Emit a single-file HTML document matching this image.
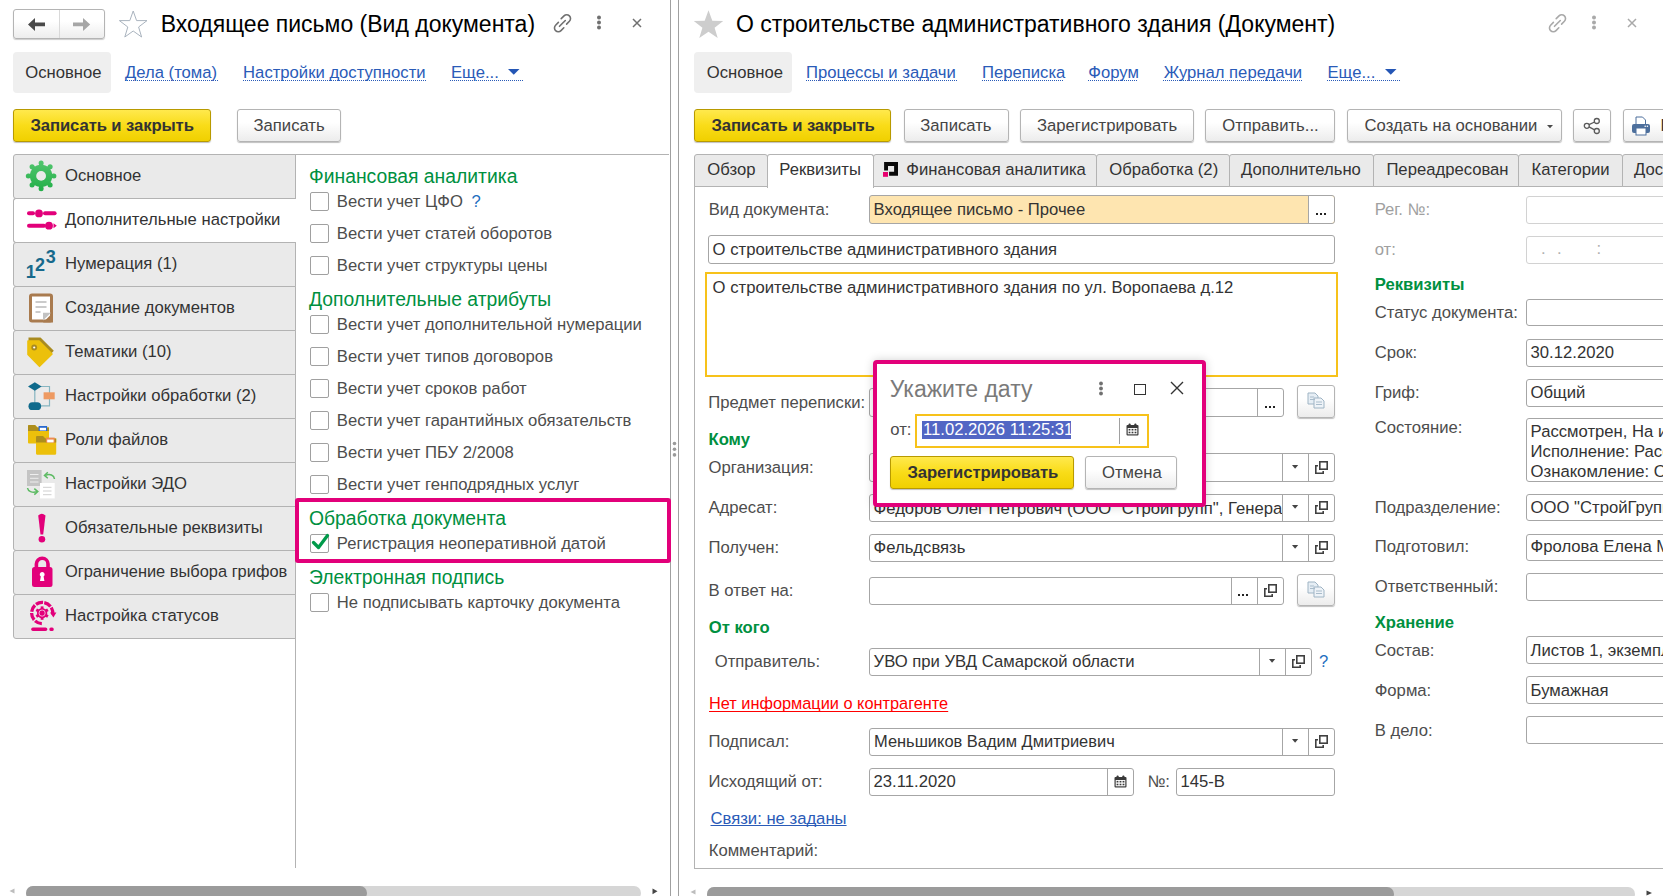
<!DOCTYPE html><html><head><meta charset="utf-8"><style>
html,body{margin:0;padding:0}
body{width:1665px;height:896px;position:relative;overflow:hidden;background:#fff;font-family:"Liberation Sans",sans-serif;font-size:16.67px}
.t{position:absolute;white-space:nowrap}
.r{position:absolute;box-sizing:border-box}
.s{position:absolute;overflow:visible}
.bw{border:1px solid #b4b4b4;border-radius:3px;background:linear-gradient(#fff 0%,#fff 40%,#ececec 100%);box-shadow:0 1px 1px rgba(0,0,0,.25)}
.by{border:1px solid #b89a00;border-radius:3px;background:linear-gradient(#ffe94d 0%,#f9dc18 50%,#f0d000 100%);box-shadow:0 1px 1px rgba(0,0,0,.25)}
.lk{color:#2a5bb8}
.u{border-bottom:1px dotted #2a5bb8}
</style></head><body>

<div class="r" style="left:13px;top:9px;width:92px;height:30px;border:1px solid #b4b4b4;border-radius:3px;background:linear-gradient(#fff 0%,#fff 40%,#ededed 100%);box-shadow:0 1px 1px rgba(0,0,0,.2)"></div>
<div class="r" style="left:59px;top:10px;width:1px;height:28px;background:#d9d9d9"></div>
<svg class="s" style="left:0px;top:0px;" width="160" height="50" viewBox="0 0 160 50"><path d="M28 24.5 L35 18 L35 22.6 L45 22.6 L45 26.3 L35 26.3 L35 31 Z" fill="#4a4a4a"/><path d="M90.2 24.5 L83 18 L83 22.6 L73 22.6 L73 26.3 L83 26.3 L83 31 Z" fill="#a6a6a6"/></svg>
<svg class="s" style="left:0px;top:0px;" width="160" height="50" viewBox="0 0 160 50"><path d="M133.2 11 L136.6 20.6 L147 20.6 L138.6 27 L141.6 37 L133.2 31 L124.8 37 L127.8 27 L119.4 20.6 L129.8 20.6 Z" fill="none" stroke="#a9b3be" stroke-width="1" stroke-linejoin="miter"/></svg>
<div class="t" style="left:160.7px;top:10px;font-size:23px;line-height:28px;color:#000;font-weight:normal;">Входящее письмо (Вид документа)</div>
<svg class="s" style="left:553px;top:14px;" width="19" height="19" viewBox="0 0 19 19"><g fill="none" stroke="#707070" stroke-width="1.6" stroke-linecap="round"><path d="M8.2 4.6 L11 1.9 A3.6 3.6 0 0 1 16.4 7.3 L13.6 10.1"/><path d="M5.4 8.4 L2.6 11.2 A3.6 3.6 0 0 0 8 16.6 L10.8 13.8"/><path d="M6.5 12.3 L12.3 6.5"/></g></svg>
<svg class="s" style="left:596px;top:14px;" width="6" height="16" viewBox="0 0 6 16"><g fill="#707070"><circle cx="3" cy="3.6" r="2"/><circle cx="3" cy="8.4" r="2"/><circle cx="3" cy="13.4" r="2"/></g></svg>
<svg class="s" style="left:632px;top:18px;" width="10" height="10" viewBox="0 0 10 10"><path d="M1 1 L9 9 M9 1 L1 9" stroke="#707070" stroke-width="1.5" fill="none"/></svg>
<div class="r" style="left:13px;top:52px;width:98px;height:41px;background:#efefef;border-radius:4px"></div>
<div class="t" style="left:25.2px;top:63px;font-size:16.67px;line-height:20px;color:#333;font-weight:normal;">Основное</div>
<div class="t" style="left:125px;top:63px;font-size:16.67px;line-height:20px;color:#2a5bb8;font-weight:normal;">Дела (тома)</div>
<div class="t" style="left:243.1px;top:63px;font-size:16.67px;line-height:20px;color:#2a5bb8;font-weight:normal;">Настройки доступности</div>
<div class="t" style="left:451px;top:63px;font-size:16.67px;line-height:20px;color:#2a5bb8;font-weight:normal;">Еще...</div>
<div class="r" style="left:125px;top:80px;width:92.5px;height:1px;background:repeating-linear-gradient(90deg,#2a5bb8 0 1px,transparent 1px 2px)"></div>
<div class="r" style="left:243px;top:80px;width:183px;height:1px;background:repeating-linear-gradient(90deg,#2a5bb8 0 1px,transparent 1px 2px)"></div>
<div class="r" style="left:450px;top:80px;width:73px;height:1px;background:repeating-linear-gradient(90deg,#2a5bb8 0 1px,transparent 1px 2px)"></div>
<svg class="s" style="left:508px;top:69px;" width="12" height="6" viewBox="0 0 12 6"><path d="M0 0 L11.5 0 L5.75 5.8 Z" fill="#2456b5"/></svg>
<div class="r by" style="left:13px;top:109px;width:198px;height:33px"></div>
<div class="t" style="left:30.5px;top:116px;font-size:16.67px;line-height:20px;color:#333;font-weight:bold;letter-spacing:-0.1px">Записать и закрыть</div>
<div class="r bw" style="left:236.6px;top:109px;width:104.4px;height:32.5px"></div>
<div class="t" style="left:253.5px;top:116px;font-size:16.67px;line-height:20px;color:#444;font-weight:normal;">Записать</div>
<div class="r" style="left:670px;top:0px;width:1px;height:896px;background:#a0a0a0"></div>
<div class="r" style="left:678px;top:0px;width:1px;height:896px;background:#a0a0a0"></div>
<svg class="s" style="left:672px;top:441px;" width="5" height="16" viewBox="0 0 5 16"><g fill="#9a9a9a"><circle cx="2.5" cy="2.5" r="1.8"/><circle cx="2.5" cy="8.2" r="1.8"/><circle cx="2.5" cy="13.9" r="1.8"/></g></svg>
<div class="r" style="left:295px;top:154px;width:374px;height:1px;background:#b3b3b3"></div>
<div class="r" style="left:295px;top:154px;width:1px;height:714px;background:#b3b3b3"></div>
<div class="r" style="left:13px;top:154px;width:283px;height:45px;background:#eaeaea;border:1px solid #b3b3b3;border-radius:3px 0 0 3px"></div>
<div class="t" style="left:65px;top:166px;font-size:16.67px;line-height:20px;color:#333;font-weight:normal;">Основное</div>
<div class="r" style="left:13px;top:198px;width:283px;height:45px;background:#fff;border:1px solid #b3b3b3;border-right:none;border-radius:3px 0 0 3px"></div>
<div class="t" style="left:65px;top:210px;font-size:16.67px;line-height:20px;color:#333;font-weight:normal;">Дополнительные настройки</div>
<div class="r" style="left:13px;top:242px;width:283px;height:45px;background:#eaeaea;border:1px solid #b3b3b3;border-radius:3px 0 0 3px"></div>
<div class="t" style="left:65px;top:254px;font-size:16.67px;line-height:20px;color:#333;font-weight:normal;">Нумерация (1)</div>
<div class="r" style="left:13px;top:286px;width:283px;height:45px;background:#eaeaea;border:1px solid #b3b3b3;border-radius:3px 0 0 3px"></div>
<div class="t" style="left:65px;top:298px;font-size:16.67px;line-height:20px;color:#333;font-weight:normal;">Создание документов</div>
<div class="r" style="left:13px;top:330px;width:283px;height:45px;background:#eaeaea;border:1px solid #b3b3b3;border-radius:3px 0 0 3px"></div>
<div class="t" style="left:65px;top:342px;font-size:16.67px;line-height:20px;color:#333;font-weight:normal;">Тематики (10)</div>
<div class="r" style="left:13px;top:374px;width:283px;height:45px;background:#eaeaea;border:1px solid #b3b3b3;border-radius:3px 0 0 3px"></div>
<div class="t" style="left:65px;top:386px;font-size:16.67px;line-height:20px;color:#333;font-weight:normal;">Настройки обработки (2)</div>
<div class="r" style="left:13px;top:418px;width:283px;height:45px;background:#eaeaea;border:1px solid #b3b3b3;border-radius:3px 0 0 3px"></div>
<div class="t" style="left:65px;top:430px;font-size:16.67px;line-height:20px;color:#333;font-weight:normal;">Роли файлов</div>
<div class="r" style="left:13px;top:462px;width:283px;height:45px;background:#eaeaea;border:1px solid #b3b3b3;border-radius:3px 0 0 3px"></div>
<div class="t" style="left:65px;top:474px;font-size:16.67px;line-height:20px;color:#333;font-weight:normal;">Настройки ЭДО</div>
<div class="r" style="left:13px;top:506px;width:283px;height:45px;background:#eaeaea;border:1px solid #b3b3b3;border-radius:3px 0 0 3px"></div>
<div class="t" style="left:65px;top:518px;font-size:16.67px;line-height:20px;color:#333;font-weight:normal;">Обязательные реквизиты</div>
<div class="r" style="left:13px;top:550px;width:283px;height:45px;background:#eaeaea;border:1px solid #b3b3b3;border-radius:3px 0 0 3px"></div>
<div class="t" style="left:65px;top:562px;font-size:16.67px;line-height:20px;color:#333;font-weight:normal;;transform:scaleX(0.985);transform-origin:0 0">Ограничение выбора грифов</div>
<div class="r" style="left:13px;top:594px;width:283px;height:45px;background:#eaeaea;border:1px solid #b3b3b3;border-radius:3px 0 0 3px"></div>
<div class="t" style="left:65px;top:606px;font-size:16.67px;line-height:20px;color:#333;font-weight:normal;">Настройка статусов</div>
<svg class="s" style="left:25px;top:160px;" width="32" height="32" viewBox="0 0 32 32"><defs><linearGradient id="gg" gradientUnits="userSpaceOnUse" x1="0" y1="3" x2="0" y2="29"><stop offset="0" stop-color="#4fc46c"/><stop offset="1" stop-color="#25b04a"/></linearGradient></defs><g fill="url(#gg)"><circle cx="28.90" cy="15.90" r="2.5"/><path d="M25.90 13.91 L28.72 13.73 L28.72 18.07 L25.90 17.89 Z"/><circle cx="25.15" cy="24.95" r="2.5"/><path d="M24.43 21.43 L26.55 23.29 L23.49 26.35 L21.63 24.23 Z"/><circle cx="16.10" cy="28.70" r="2.5"/><path d="M18.09 25.70 L18.27 28.52 L13.93 28.52 L14.11 25.70 Z"/><circle cx="7.05" cy="24.95" r="2.5"/><path d="M10.57 24.23 L8.71 26.35 L5.65 23.29 L7.77 21.43 Z"/><circle cx="3.30" cy="15.90" r="2.5"/><path d="M6.30 17.89 L3.48 18.07 L3.48 13.73 L6.30 13.91 Z"/><circle cx="7.05" cy="6.85" r="2.5"/><path d="M7.77 10.37 L5.65 8.51 L8.71 5.45 L10.57 7.57 Z"/><circle cx="16.10" cy="3.10" r="2.5"/><path d="M14.11 6.10 L13.93 3.28 L18.27 3.28 L18.09 6.10 Z"/><circle cx="25.15" cy="6.85" r="2.5"/><path d="M21.63 7.57 L23.49 5.45 L26.55 8.51 L24.43 10.37 Z"/><circle cx="16.1" cy="15.9" r="11.2"/></g><circle cx="16.1" cy="15.9" r="4.9" fill="#eaeaea"/></svg>
<svg class="s" style="left:0px;top:0px;pointer-events:none" width="80" height="680" viewBox="0 0 80 680"><g stroke="#e2007a" stroke-width="4" stroke-linecap="round"><path d="M29 213.3 L33 213.3"/><path d="M45 213.3 L54.6 213.3"/><path d="M29 225.7 L44 225.7"/></g><circle cx="39" cy="213.4" r="3.9" fill="#e2007a"/><circle cx="49" cy="225.7" r="3.9" fill="#e2007a"/><path d="M53.5 223.2 L56.8 225.7 L53.5 228.2 Z" fill="#e2007a"/></svg>
<svg class="s" style="left:0px;top:0px;" width="80" height="680" viewBox="0 0 80 680"><g fill="#17698c" font-family="Liberation Sans" font-weight="bold" font-size="18"><text x="25.8" y="278.3">1</text><text x="35" y="270.5">2</text><text x="45.8" y="262.9">3</text></g></svg>
<svg class="s" style="left:28px;top:293px;" width="26" height="30" viewBox="0 0 26 30"><rect x="2.5" y="2" width="21" height="26" rx="1.5" fill="#fff" stroke="#a97b4f" stroke-width="3"/><path d="M15 29.5 L25 19.5 L25 29.5 Z" fill="#a97b4f"/><path d="M15 27.5 L15 19.8 L23 19.8 Z" fill="#c2c2c2"/><g stroke="#a0a0a0" stroke-width="1.1"><path d="M7.5 9 L18.5 9"/><path d="M7.5 14 L18.5 14"/><path d="M7.5 19 L12.5 19"/></g></svg>
<svg class="s" style="left:0px;top:0px;" width="80" height="680" viewBox="0 0 80 680"><path d="M28.5 337.5 L40.5 337.5 L53.8 350.8 L50 355 L39 341 L28.5 341 Z" fill="#a98b20"/><path d="M28 341 L39 341 L52 354 L39.5 366.3 L28 354.5 Z" fill="#ecc00b" stroke="#ecc00b" stroke-width="1.6" stroke-linejoin="round"/><circle cx="34.2" cy="347.5" r="2.9" fill="#a98b20"/><circle cx="34.2" cy="347.5" r="1.1" fill="#fff"/></svg>
<svg class="s" style="left:0px;top:0px;" width="80" height="680" viewBox="0 0 80 680"><path d="M41 386.5 L49.5 386.5 L49.5 405.8 L41 405.8" fill="none" stroke="#86b5c0" stroke-width="1.2"/><path d="M34.8 390 L34.8 403" stroke="#86b5c0" stroke-width="1.2"/><path d="M28 386.5 L34.8 382.3 L41.6 386.5 L34.8 390.8 Z" fill="#0f6a8c"/><rect x="28.5" y="402.3" width="12.6" height="7.8" rx="3.9" fill="#0f6a8c"/><rect x="43.6" y="392.3" width="11.1" height="7" fill="#ee9a62"/></svg>
<svg class="s" style="left:0px;top:0px;" width="80" height="680" viewBox="0 0 80 680"><path d="M28 426 Q28 425 29 425 L35 425 L37.5 427.5 L49 427.5 L49 442.5 Q49 443.6 48 443.6 L29 443.6 Q28 443.6 28 442.5 Z" fill="#ecc00b"/><path d="M28 426 Q28 425 29 425 L35 425 L37.5 427.5 L49 427.5 L49 431 L28 431 Z" fill="#ad8e1d"/><rect x="38.6" y="426" width="8.5" height="5" fill="#2a6ad0"/><rect x="39.8" y="427.8" width="6.2" height="2.6" fill="#fff"/><path d="M36 437 Q36 436 37 436 L43 436 L45.5 438.5 L56.2 438.5 L56.2 453.6 Q56.2 454.7 55.2 454.7 L37 454.7 Q36 454.7 36 453.6 Z" fill="#ecc00b"/><path d="M36 437 Q36 436 37 436 L43 436 L45.5 438.5 L56.2 438.5 L56.2 442.6 L36 442.6 Z" fill="#ad8e1d"/><rect x="46" y="437.6" width="8.7" height="5" fill="#ee8a50"/><rect x="47.2" y="439.6" width="6.4" height="2.8" fill="#fff"/></svg>
<svg class="s" style="left:0px;top:0px;" width="80" height="680" viewBox="0 0 80 680"><rect x="27" y="470" width="14.6" height="16" fill="#c4c4c4"/><g stroke="#eee" stroke-width="1"><path d="M30 474.5 L38.5 474.5"/><path d="M30 478.3 L38.5 478.3"/><path d="M30 482 L38.5 482"/></g><rect x="40" y="483" width="14.7" height="15.4" fill="#fff"/><g stroke="#cfcfcf" stroke-width="1"><path d="M43 487.3 L51.5 487.3"/><path d="M43 491 L51.5 491"/><path d="M43 494.7 L51.5 494.7"/></g><path d="M54.5 479 C54 475 50 473.5 45.5 475.2" fill="none" stroke="#5cba62" stroke-width="1.5"/><path d="M47.8 472.3 L44.5 475.4 L47.8 478.2" stroke="#5cba62" stroke-width="1.5" fill="none"/><path d="M27.5 488 C28 491.5 32 493 37 491.8" fill="none" stroke="#5cba62" stroke-width="1.5"/><path d="M34.3 488.6 L37.8 491.6 L34.3 494.6" stroke="#5cba62" stroke-width="1.5" fill="none"/></svg>
<svg class="s" style="left:0px;top:0px;" width="80" height="680" viewBox="0 0 80 680"><path d="M38.2 515.5 Q41.8 512 45.5 515.5 L43.2 534.5 L40.5 534.5 Z" fill="#e2007a"/><circle cx="41.9" cy="539.3" r="3.3" fill="#e2007a"/></svg>
<svg class="s" style="left:0px;top:0px;" width="80" height="680" viewBox="0 0 80 680"><path d="M36.4 568 L36.4 564 A5.8 5.8 0 0 1 48 564 L48 568" fill="none" stroke="#e2007a" stroke-width="3.6"/><rect x="32" y="567" width="20.5" height="20" rx="2.5" fill="#e2007a"/><path d="M42.2 572 A2.4 2.4 0 0 1 43.6 576.4 L44.4 581 L40 581 L40.8 576.4 A2.4 2.4 0 0 1 42.2 572 Z" fill="#fff"/></svg>
<svg class="s" style="left:0px;top:0px;" width="80" height="680" viewBox="0 0 80 680"><path d="M41.83 623.59 A10.6 10.6 0 1 1 52.70 614.48" fill="none" stroke="#e2007a" stroke-width="3.3" stroke-dasharray="7.4 1.3"/><path d="M50 612.6 L56.4 612.6 L53.4 617.6 Z" fill="#e2007a"/><rect x="40.70" y="606.40" width="2.8" height="3" fill="#e2007a" transform="rotate(0 42.1 613.1)"/><rect x="40.70" y="606.40" width="2.8" height="3" fill="#e2007a" transform="rotate(60 42.1 613.1)"/><rect x="40.70" y="606.40" width="2.8" height="3" fill="#e2007a" transform="rotate(120 42.1 613.1)"/><rect x="40.70" y="606.40" width="2.8" height="3" fill="#e2007a" transform="rotate(180 42.1 613.1)"/><rect x="40.70" y="606.40" width="2.8" height="3" fill="#e2007a" transform="rotate(240 42.1 613.1)"/><rect x="40.70" y="606.40" width="2.8" height="3" fill="#e2007a" transform="rotate(300 42.1 613.1)"/><circle cx="42.1" cy="613.1" r="5.2" fill="#e2007a"/><circle cx="42.1" cy="613.1" r="3.1" fill="none" stroke="#f3c0dc" stroke-width="0.9"/><rect x="31.2" y="627.4" width="16.1" height="3.5" rx="1.7" fill="#e2007a"/><rect x="49.4" y="627.4" width="4.3" height="3.5" rx="1.5" fill="#e2007a"/></svg>
<div class="t" style="left:309px;top:165px;font-size:19.33px;line-height:23px;color:#00903f;font-weight:normal;">Финансовая аналитика</div>
<div class="r" style="left:310px;top:192px;width:19px;height:19px;border:1px solid #a0a0a0;border-radius:2px;background:#fff"></div>
<div class="t" style="left:336.8px;top:192px;font-size:16.67px;line-height:20px;color:#4d4d4d;font-weight:normal;">Вести учет ЦФО</div>
<div class="t" style="left:471.5px;top:192px;font-size:16.67px;line-height:20px;color:#1f6fc0;font-weight:normal;font-weight:normal">?</div>
<div class="r" style="left:310px;top:224px;width:19px;height:19px;border:1px solid #a0a0a0;border-radius:2px;background:#fff"></div>
<div class="t" style="left:336.8px;top:224px;font-size:16.67px;line-height:20px;color:#4d4d4d;font-weight:normal;">Вести учет статей оборотов</div>
<div class="r" style="left:310px;top:256px;width:19px;height:19px;border:1px solid #a0a0a0;border-radius:2px;background:#fff"></div>
<div class="t" style="left:336.8px;top:256px;font-size:16.67px;line-height:20px;color:#4d4d4d;font-weight:normal;">Вести учет структуры цены</div>
<div class="t" style="left:309px;top:288px;font-size:19.33px;line-height:23px;color:#00903f;font-weight:normal;">Дополнительные атрибуты</div>
<div class="r" style="left:310px;top:315px;width:19px;height:19px;border:1px solid #a0a0a0;border-radius:2px;background:#fff"></div>
<div class="t" style="left:336.8px;top:315px;font-size:16.67px;line-height:20px;color:#4d4d4d;font-weight:normal;">Вести учет дополнительной нумерации</div>
<div class="r" style="left:310px;top:347px;width:19px;height:19px;border:1px solid #a0a0a0;border-radius:2px;background:#fff"></div>
<div class="t" style="left:336.8px;top:347px;font-size:16.67px;line-height:20px;color:#4d4d4d;font-weight:normal;">Вести учет типов договоров</div>
<div class="r" style="left:310px;top:379px;width:19px;height:19px;border:1px solid #a0a0a0;border-radius:2px;background:#fff"></div>
<div class="t" style="left:336.8px;top:379px;font-size:16.67px;line-height:20px;color:#4d4d4d;font-weight:normal;">Вести учет сроков работ</div>
<div class="r" style="left:310px;top:411px;width:19px;height:19px;border:1px solid #a0a0a0;border-radius:2px;background:#fff"></div>
<div class="t" style="left:336.8px;top:411px;font-size:16.67px;line-height:20px;color:#4d4d4d;font-weight:normal;">Вести учет гарантийных обязательств</div>
<div class="r" style="left:310px;top:443px;width:19px;height:19px;border:1px solid #a0a0a0;border-radius:2px;background:#fff"></div>
<div class="t" style="left:336.8px;top:443px;font-size:16.67px;line-height:20px;color:#4d4d4d;font-weight:normal;">Вести учет ПБУ 2/2008</div>
<div class="r" style="left:310px;top:475px;width:19px;height:19px;border:1px solid #a0a0a0;border-radius:2px;background:#fff"></div>
<div class="t" style="left:336.8px;top:475px;font-size:16.67px;line-height:20px;color:#4d4d4d;font-weight:normal;">Вести учет генподрядных услуг</div>
<div class="t" style="left:309px;top:507px;font-size:19.33px;line-height:23px;color:#00903f;font-weight:normal;">Обработка документа</div>
<div class="r" style="left:310px;top:534px;width:19px;height:19px;border:1px solid #a0a0a0;border-radius:2px;background:#fff"></div>
<svg class="s" style="left:311px;top:534px;" width="19" height="17" viewBox="0 0 19 17"><path d="M2.5 8.5 L7.5 13.5 L16.5 1.5" fill="none" stroke="#009a4a" stroke-width="3.3" stroke-linecap="round" stroke-linejoin="round"/></svg>
<div class="t" style="left:336.8px;top:534px;font-size:16.67px;line-height:20px;color:#4d4d4d;font-weight:normal;">Регистрация неоперативной датой</div>
<div class="t" style="left:309px;top:566px;font-size:19.33px;line-height:23px;color:#00903f;font-weight:normal;">Электронная подпись</div>
<div class="r" style="left:310px;top:593px;width:19px;height:19px;border:1px solid #a0a0a0;border-radius:2px;background:#fff"></div>
<div class="t" style="left:336.8px;top:593px;font-size:16.67px;line-height:20px;color:#4d4d4d;font-weight:normal;">Не подписывать карточку документа</div>
<div class="r" style="left:295px;top:498px;width:376px;height:65px;border:4px solid #e2007a;border-radius:3px"></div>
<svg class="s" style="left:9px;top:888px;" width="6" height="6" viewBox="0 0 6 6"><path d="M5.5 0.5 L0.5 3 L5.5 5.5 Z" fill="#bdbdbd"/></svg>
<div class="r" style="left:26px;top:886px;width:615px;height:14px;background:#d6d6d6;border-radius:7px"></div>
<div class="r" style="left:26px;top:886px;width:341px;height:14px;background:#9b9b9b;border-radius:7px"></div>
<svg class="s" style="left:652px;top:888px;" width="6" height="7" viewBox="0 0 6 7"><path d="M0.5 0.5 L5.5 3.3 L0.5 6.3 Z" fill="#454545"/></svg>
<div style="position:absolute;left:679px;top:0;width:984px;height:896px;overflow:hidden"><div style="position:absolute;left:-679px;top:0;width:1665px;height:896px">
<svg class="s" style="left:693px;top:9px;" width="31" height="30" viewBox="0 0 31 30"><path d="M15.5 1.2 L19.3 11.7 L30.2 11.9 L21.6 18.7 L24.7 29 L15.5 22.8 L6.3 29 L9.4 18.7 L0.8 11.9 L11.7 11.7 Z" fill="#cdcdcd"/></svg>
<div class="t" style="left:735.9px;top:10px;font-size:23px;line-height:28px;color:#000;font-weight:normal;">О строительстве административного здания (Документ)</div>
<svg class="s" style="left:1548px;top:14px;" width="19" height="19" viewBox="0 0 19 19"><g fill="none" stroke="#a9a9a9" stroke-width="1.6" stroke-linecap="round"><path d="M8.2 4.6 L11 1.9 A3.6 3.6 0 0 1 16.4 7.3 L13.6 10.1"/><path d="M5.4 8.4 L2.6 11.2 A3.6 3.6 0 0 0 8 16.6 L10.8 13.8"/><path d="M6.5 12.3 L12.3 6.5"/></g></svg>
<svg class="s" style="left:1591px;top:14px;" width="6" height="16" viewBox="0 0 6 16"><g fill="#a9a9a9"><circle cx="3" cy="3.6" r="2"/><circle cx="3" cy="8.4" r="2"/><circle cx="3" cy="13.4" r="2"/></g></svg>
<svg class="s" style="left:1627px;top:18px;" width="10" height="10" viewBox="0 0 10 10"><path d="M1 1 L9 9 M9 1 L1 9" stroke="#a9a9a9" stroke-width="1.5" fill="none"/></svg>
<div class="r" style="left:694px;top:52px;width:98px;height:41px;background:#efefef;border-radius:4px"></div>
<div class="t" style="left:706.7px;top:63px;font-size:16.67px;line-height:20px;color:#333;font-weight:normal;">Основное</div>
<div class="t" style="left:806px;top:63px;font-size:16.67px;line-height:20px;color:#2a5bb8;font-weight:normal;">Процессы и задачи</div>
<div class="r" style="left:805.5px;top:80px;width:151px;height:1px;background:repeating-linear-gradient(90deg,#2a5bb8 0 1px,transparent 1px 2px)"></div>
<div class="t" style="left:982px;top:63px;font-size:16.67px;line-height:20px;color:#2a5bb8;font-weight:normal;">Переписка</div>
<div class="r" style="left:981.5px;top:80px;width:81px;height:1px;background:repeating-linear-gradient(90deg,#2a5bb8 0 1px,transparent 1px 2px)"></div>
<div class="t" style="left:1088.3px;top:63px;font-size:16.67px;line-height:20px;color:#2a5bb8;font-weight:normal;">Форум</div>
<div class="r" style="left:1087.8px;top:80px;width:50.6px;height:1px;background:repeating-linear-gradient(90deg,#2a5bb8 0 1px,transparent 1px 2px)"></div>
<div class="t" style="left:1163.7px;top:63px;font-size:16.67px;line-height:20px;color:#2a5bb8;font-weight:normal;">Журнал передачи</div>
<div class="r" style="left:1163.2px;top:80px;width:139px;height:1px;background:repeating-linear-gradient(90deg,#2a5bb8 0 1px,transparent 1px 2px)"></div>
<div class="t" style="left:1327.5px;top:63px;font-size:16.67px;line-height:20px;color:#2a5bb8;font-weight:normal;">Еще...</div>
<div class="r" style="left:1327.0px;top:80px;width:72.5px;height:1px;background:repeating-linear-gradient(90deg,#2a5bb8 0 1px,transparent 1px 2px)"></div>
<svg class="s" style="left:1385px;top:69px;" width="12" height="6" viewBox="0 0 12 6"><path d="M0 0 L11.5 0 L5.75 5.8 Z" fill="#2456b5"/></svg>
<div class="r by" style="left:694.3px;top:109px;width:197.2px;height:33px"></div>
<div class="t" style="left:711.4px;top:116px;font-size:16.67px;line-height:20px;color:#333;font-weight:bold;letter-spacing:-0.1px">Записать и закрыть</div>
<div class="r bw" style="left:903.5px;top:109px;width:105px;height:32.5px"></div>
<div class="t" style="left:920.3px;top:116px;font-size:16.67px;line-height:20px;color:#444;font-weight:normal;">Записать</div>
<div class="r bw" style="left:1020.2px;top:109px;width:173.6px;height:32.5px"></div>
<div class="t" style="left:1037px;top:116px;font-size:16.67px;line-height:20px;color:#444;font-weight:normal;">Зарегистрировать</div>
<div class="r bw" style="left:1205.1px;top:109px;width:130.4px;height:32.5px"></div>
<div class="t" style="left:1222.2px;top:116px;font-size:16.67px;line-height:20px;color:#444;font-weight:normal;">Отправить...</div>
<div class="r bw" style="left:1347.2px;top:109px;width:215px;height:32.5px"></div>
<div class="t" style="left:1364.6px;top:116px;font-size:16.67px;line-height:20px;color:#444;font-weight:normal;">Создать на основании</div>
<svg class="s" style="left:1547px;top:125px;" width="7" height="4" viewBox="0 0 7 4"><path d="M0 0 L6 0 L3 3.2 Z" fill="#4a4a4a"/></svg>
<div class="r bw" style="left:1573.4px;top:109px;width:37.2px;height:32.5px"></div>
<svg class="s" style="left:1583px;top:118px;" width="18" height="17" viewBox="0 0 18 17"><g fill="none" stroke="#5a5a5a" stroke-width="1.3"><circle cx="13.8" cy="3" r="2.5"/><circle cx="3.8" cy="7.8" r="2.5"/><circle cx="13.8" cy="13" r="2.5"/><path d="M6 6.7 L11.6 4 M6 8.9 L11.6 11.9"/></g></svg>
<div class="r bw" style="left:1622.5px;top:109px;width:60px;height:32.5px"></div>
<svg class="s" style="left:1631px;top:116px;" width="21" height="20" viewBox="0 0 21 20"><path d="M5 1 L11.5 1 L14.5 4 L14.5 9 L5 9 Z" fill="#fff" stroke="#4d6f9c" stroke-width="1"/><rect x="1" y="8" width="18" height="9" rx="2" fill="#4d6f9c"/><rect x="5" y="12" width="10" height="7" fill="#fff" stroke="#4d6f9c" stroke-width="1"/><circle cx="14.2" cy="10.3" r="0.8" fill="#fff"/><circle cx="16.4" cy="10.3" r="0.8" fill="#fff"/></svg>
<div class="t" style="left:1660.5px;top:116px;font-size:16.67px;line-height:20px;color:#333;font-weight:normal;">Печать</div>
<div class="r" style="left:694px;top:186px;width:1000px;height:683px;border:1px solid #b3b3b3;background:#fff"></div>
<div class="r" style="left:694px;top:154px;width:74px;height:33px;background:#eaeaea;border:1px solid #b3b3b3;border-radius:3px 3px 0 0"></div>
<div class="t" style="left:707.3px;top:160px;font-size:16.67px;line-height:20px;color:#333;font-weight:normal;">Обзор</div>
<div class="r" style="left:767px;top:154px;width:107px;height:34px;background:#fff;border:1px solid #b3b3b3;border-bottom:none;border-radius:3px 3px 0 0"></div>
<div class="t" style="left:779.3px;top:160px;font-size:16.67px;line-height:20px;color:#333;font-weight:normal;">Реквизиты</div>
<div class="r" style="left:873px;top:154px;width:224px;height:33px;background:#eaeaea;border:1px solid #b3b3b3;border-radius:3px 3px 0 0"></div>
<div class="t" style="left:906.3px;top:160px;font-size:16.67px;line-height:20px;color:#333;font-weight:normal;">Финансовая аналитика</div>
<div class="r" style="left:1096px;top:154px;width:134px;height:33px;background:#eaeaea;border:1px solid #b3b3b3;border-radius:3px 3px 0 0"></div>
<div class="t" style="left:1109.2px;top:160px;font-size:16.67px;line-height:20px;color:#333;font-weight:normal;">Обработка (2)</div>
<div class="r" style="left:1229px;top:154px;width:145px;height:33px;background:#eaeaea;border:1px solid #b3b3b3;border-radius:3px 3px 0 0"></div>
<div class="t" style="left:1241px;top:160px;font-size:16.67px;line-height:20px;color:#333;font-weight:normal;">Дополнительно</div>
<div class="r" style="left:1373px;top:154px;width:146px;height:33px;background:#eaeaea;border:1px solid #b3b3b3;border-radius:3px 3px 0 0"></div>
<div class="t" style="left:1386.4px;top:160px;font-size:16.67px;line-height:20px;color:#333;font-weight:normal;">Переадресован</div>
<div class="r" style="left:1518px;top:154px;width:105px;height:33px;background:#eaeaea;border:1px solid #b3b3b3;border-radius:3px 3px 0 0"></div>
<div class="t" style="left:1531.5px;top:160px;font-size:16.67px;line-height:20px;color:#333;font-weight:normal;">Категории</div>
<div class="r" style="left:1622px;top:154px;width:79px;height:33px;background:#eaeaea;border:1px solid #b3b3b3;border-radius:3px 3px 0 0"></div>
<div class="t" style="left:1634px;top:160px;font-size:16.67px;line-height:20px;color:#333;font-weight:normal;">Доступ</div>
<svg class="s" style="left:882px;top:160px;" width="18" height="18" viewBox="0 0 18 18"><path d="M2.1 2 H16 V15.7 H7.1 V11.8 H12.1 V6 H6 V10.4 H2.1 Z" fill="#0a0a0a"/><rect x="1" y="12" width="5" height="4.8" fill="#e8006f"/></svg>
<div class="t" style="left:708.75px;top:200px;font-size:16.67px;line-height:20px;color:#4d4d4d;font-weight:normal;">Вид документа:</div>
<div class="r" style="left:869px;top:195px;width:466px;height:29px;background:#fee5b0;border:1px solid #a6a6a6;border-radius:3px"></div>
<div class="r" style="left:1308px;top:195px;width:1px;height:29px;background:#a6a6a6"></div>
<div class="t" style="left:873.6px;top:200px;font-size:16.67px;line-height:20px;color:#333;font-weight:normal;">Входящее письмо - Прочее</div>
<div class="r" style="left:1309px;top:196px;width:25px;height:27px;background:#fff;border-radius:0 3px 3px 0"></div>
<svg class="s" style="left:1316px;top:213px;" width="12" height="4" viewBox="0 0 12 4"><g fill="#222"><rect x="0" y="0" width="2" height="2"/><rect x="4" y="0" width="2" height="2"/><rect x="8" y="0" width="2" height="2"/></g></svg>
<div class="r" style="left:708px;top:235px;width:627px;height:29px;background:#fff;border:1px solid #a6a6a6;border-radius:3px"></div>
<div class="t" style="left:712.6px;top:240px;font-size:16.67px;line-height:20px;color:#333;font-weight:normal;">О строительстве административного здания</div>
<div class="r" style="left:705px;top:272px;width:633px;height:105px;border:2px solid #f7c21a;background:#fff"></div>
<div class="t" style="left:712.6px;top:278px;font-size:16.67px;line-height:20px;color:#333;font-weight:normal;">О строительстве административного здания по ул. Воропаева д.12</div>
<div class="t" style="left:708.2px;top:393px;font-size:16.67px;line-height:20px;color:#4d4d4d;font-weight:normal;">Предмет переписки:</div>
<div class="r" style="left:869px;top:388px;width:415px;height:28.5px;background:#fff;border:1px solid #a6a6a6;border-radius:3px"></div>
<div class="r" style="left:1257px;top:388px;width:1px;height:28.5px;background:#a6a6a6"></div>
<svg class="s" style="left:1265px;top:406px;" width="12" height="4" viewBox="0 0 12 4"><g fill="#222"><rect x="0" y="0" width="2" height="2"/><rect x="4" y="0" width="2" height="2"/><rect x="8" y="0" width="2" height="2"/></g></svg>
<div class="r" style="left:1297px;top:385px;width:38px;height:33px;border:1px solid #b4b4b4;border-radius:3px;background:linear-gradient(#fff 0%,#fff 40%,#ececec 100%);box-shadow:0 1px 1px rgba(0,0,0,.25)"></div>
<svg class="s" style="left:1307.0px;top:391.5px;" width="18" height="17" viewBox="0 0 18 17"><path d="M1 1 L8 1 L11 4 L11 12 L1 12 Z" fill="#e6eef5" stroke="#9fb4c4" stroke-width="1"/><path d="M7 6 L14 6 L17 9 L17 16 L7 16 Z" fill="#eef3f8" stroke="#9fb4c4" stroke-width="1"/><g stroke="#a9bccb" stroke-width="1"><path d="M3 5 L7 5 M3 7.5 L8 7.5 M9 10 L15 10 M9 12.5 L15 12.5"/></g></svg>
<div class="t" style="left:708.5px;top:430px;font-size:16.67px;line-height:20px;color:#00903f;font-weight:bold;">Кому</div>
<div class="t" style="left:708.5px;top:458px;font-size:16.67px;line-height:20px;color:#4d4d4d;font-weight:normal;">Организация:</div>
<div class="r" style="left:869px;top:453px;width:466px;height:28.5px;background:#fff;border:1px solid #a6a6a6;border-radius:3px"></div>
<div class="r" style="left:1282px;top:453px;width:1px;height:28.5px;background:#a6a6a6"></div>
<div class="r" style="left:1308px;top:453px;width:1px;height:28.5px;background:#a6a6a6"></div>
<svg class="s" style="left:1292px;top:465px;" width="8" height="5" viewBox="0 0 8 5"><path d="M0 0 L6.2 0 L3.1 3.8 Z" fill="#444"/></svg>
<svg class="s" style="left:1314.5px;top:461px;" width="13" height="13" viewBox="0 0 13 13"><g fill="none" stroke="#404040" stroke-width="1.6"><rect x="4.8" y="0.8" width="7.4" height="7.4"/><path d="M3 4.8 L0.8 4.8 L0.8 12.2 L8.2 12.2 L8.2 10"/></g></svg>
<div class="t" style="left:708.5px;top:498px;font-size:16.67px;line-height:20px;color:#4d4d4d;font-weight:normal;">Адресат:</div>
<div class="r" style="left:869px;top:493.5px;width:466px;height:28.0px;background:#fff;border:1px solid #a6a6a6;border-radius:3px"></div>
<div class="r" style="left:1282px;top:493.5px;width:1px;height:28.0px;background:#a6a6a6"></div>
<div class="r" style="left:1308px;top:493.5px;width:1px;height:28.0px;background:#a6a6a6"></div>
<div style="position:absolute;left:870px;top:494px;width:412px;height:27px;overflow:hidden">
<div class="t" style="left:3.6px;top:5px;font-size:16.67px;line-height:20px;color:#333;font-weight:normal;">Федоров Олег Петрович (ООО &quot;СтройГрупп&quot;, Генеральный директор)</div>
</div>
<svg class="s" style="left:1292px;top:505px;" width="8" height="5" viewBox="0 0 8 5"><path d="M0 0 L6.2 0 L3.1 3.8 Z" fill="#444"/></svg>
<svg class="s" style="left:1314.5px;top:501px;" width="13" height="13" viewBox="0 0 13 13"><g fill="none" stroke="#404040" stroke-width="1.6"><rect x="4.8" y="0.8" width="7.4" height="7.4"/><path d="M3 4.8 L0.8 4.8 L0.8 12.2 L8.2 12.2 L8.2 10"/></g></svg>
<div class="t" style="left:708.5px;top:538px;font-size:16.67px;line-height:20px;color:#4d4d4d;font-weight:normal;">Получен:</div>
<div class="r" style="left:869px;top:533.5px;width:466px;height:28.5px;background:#fff;border:1px solid #a6a6a6;border-radius:3px"></div>
<div class="r" style="left:1282px;top:533.5px;width:1px;height:28.5px;background:#a6a6a6"></div>
<div class="r" style="left:1308px;top:533.5px;width:1px;height:28.5px;background:#a6a6a6"></div>
<div class="t" style="left:873.6px;top:538px;font-size:16.67px;line-height:20px;color:#333;font-weight:normal;">Фельдсвязь</div>
<svg class="s" style="left:1292px;top:545px;" width="8" height="5" viewBox="0 0 8 5"><path d="M0 0 L6.2 0 L3.1 3.8 Z" fill="#444"/></svg>
<svg class="s" style="left:1314.5px;top:541px;" width="13" height="13" viewBox="0 0 13 13"><g fill="none" stroke="#404040" stroke-width="1.6"><rect x="4.8" y="0.8" width="7.4" height="7.4"/><path d="M3 4.8 L0.8 4.8 L0.8 12.2 L8.2 12.2 L8.2 10"/></g></svg>
<div class="t" style="left:708.5px;top:581px;font-size:16.67px;line-height:20px;color:#4d4d4d;font-weight:normal;">В ответ на:</div>
<div class="r" style="left:869px;top:576.5px;width:415px;height:28.5px;background:#fff;border:1px solid #a6a6a6;border-radius:3px"></div>
<div class="r" style="left:1231px;top:576.5px;width:1px;height:28.5px;background:#a6a6a6"></div>
<div class="r" style="left:1257px;top:576.5px;width:1px;height:28.5px;background:#a6a6a6"></div>
<svg class="s" style="left:1238px;top:594px;" width="12" height="4" viewBox="0 0 12 4"><g fill="#222"><rect x="0" y="0" width="2" height="2"/><rect x="4" y="0" width="2" height="2"/><rect x="8" y="0" width="2" height="2"/></g></svg>
<svg class="s" style="left:1264px;top:584px;" width="13" height="13" viewBox="0 0 13 13"><g fill="none" stroke="#404040" stroke-width="1.6"><rect x="4.8" y="0.8" width="7.4" height="7.4"/><path d="M3 4.8 L0.8 4.8 L0.8 12.2 L8.2 12.2 L8.2 10"/></g></svg>
<div class="r" style="left:1297px;top:574px;width:38px;height:32px;border:1px solid #b4b4b4;border-radius:3px;background:linear-gradient(#fff 0%,#fff 40%,#ececec 100%);box-shadow:0 1px 1px rgba(0,0,0,.25)"></div>
<svg class="s" style="left:1307.0px;top:580.5px;" width="18" height="17" viewBox="0 0 18 17"><path d="M1 1 L8 1 L11 4 L11 12 L1 12 Z" fill="#e6eef5" stroke="#9fb4c4" stroke-width="1"/><path d="M7 6 L14 6 L17 9 L17 16 L7 16 Z" fill="#eef3f8" stroke="#9fb4c4" stroke-width="1"/><g stroke="#a9bccb" stroke-width="1"><path d="M3 5 L7 5 M3 7.5 L8 7.5 M9 10 L15 10 M9 12.5 L15 12.5"/></g></svg>
<div class="t" style="left:708.7px;top:618px;font-size:16.67px;line-height:20px;color:#00903f;font-weight:bold;">От кого</div>
<div class="t" style="left:714.7px;top:652px;font-size:16.67px;line-height:20px;color:#4d4d4d;font-weight:normal;">Отправитель:</div>
<div class="r" style="left:869px;top:647.5px;width:443px;height:28.0px;background:#fff;border:1px solid #a6a6a6;border-radius:3px"></div>
<div class="r" style="left:1259px;top:647.5px;width:1px;height:28.0px;background:#a6a6a6"></div>
<div class="r" style="left:1285px;top:647.5px;width:1px;height:28.0px;background:#a6a6a6"></div>
<div class="t" style="left:873.6px;top:652px;font-size:16.67px;line-height:20px;color:#333;font-weight:normal;">УВО при УВД Самарской области</div>
<svg class="s" style="left:1269px;top:659px;" width="8" height="5" viewBox="0 0 8 5"><path d="M0 0 L6.2 0 L3.1 3.8 Z" fill="#444"/></svg>
<svg class="s" style="left:1291.5px;top:655px;" width="13" height="13" viewBox="0 0 13 13"><g fill="none" stroke="#404040" stroke-width="1.6"><rect x="4.8" y="0.8" width="7.4" height="7.4"/><path d="M3 4.8 L0.8 4.8 L0.8 12.2 L8.2 12.2 L8.2 10"/></g></svg>
<div class="t" style="left:1319px;top:652px;font-size:16.67px;line-height:20px;color:#1f6fc0;font-weight:normal;">?</div>
<div class="t" style="left:709px;top:694px;font-size:16.67px;line-height:20px;color:#f00;font-weight:normal;text-decoration:underline;text-underline-offset:2px;text-decoration-skip-ink:none;transform:scaleX(0.98);transform-origin:0 0">Нет информации о контрагенте</div>
<div class="t" style="left:708.5px;top:732px;font-size:16.67px;line-height:20px;color:#4d4d4d;font-weight:normal;">Подписал:</div>
<div class="r" style="left:869px;top:727.5px;width:466px;height:28.0px;background:#fff;border:1px solid #a6a6a6;border-radius:3px"></div>
<div class="r" style="left:1282px;top:727.5px;width:1px;height:28.0px;background:#a6a6a6"></div>
<div class="r" style="left:1308px;top:727.5px;width:1px;height:28.0px;background:#a6a6a6"></div>
<div class="t" style="left:873.6px;top:732px;font-size:16.67px;line-height:20px;color:#333;font-weight:normal;;transform:scaleX(0.987);transform-origin:0 0">Меньшиков Вадим Дмитриевич</div>
<svg class="s" style="left:1292px;top:739px;" width="8" height="5" viewBox="0 0 8 5"><path d="M0 0 L6.2 0 L3.1 3.8 Z" fill="#444"/></svg>
<svg class="s" style="left:1314.5px;top:735px;" width="13" height="13" viewBox="0 0 13 13"><g fill="none" stroke="#404040" stroke-width="1.6"><rect x="4.8" y="0.8" width="7.4" height="7.4"/><path d="M3 4.8 L0.8 4.8 L0.8 12.2 L8.2 12.2 L8.2 10"/></g></svg>
<div class="t" style="left:708.5px;top:772px;font-size:16.67px;line-height:20px;color:#4d4d4d;font-weight:normal;">Исходящий от:</div>
<div class="r" style="left:869px;top:767.5px;width:265px;height:28.0px;background:#fff;border:1px solid #a6a6a6;border-radius:3px"></div>
<div class="r" style="left:1107px;top:767.5px;width:1px;height:28.0px;background:#a6a6a6"></div>
<div class="t" style="left:873.6px;top:772px;font-size:16.67px;line-height:20px;color:#333;font-weight:normal;">23.11.2020</div>
<svg class="s" style="left:1114px;top:775px;" width="13" height="13" viewBox="0 0 13 13"><rect x="0.5" y="2" width="12" height="10.5" rx="1" fill="#3a3a3a"/><rect x="1.7" y="5" width="9.6" height="6.3" fill="#fff"/><g fill="#3a3a3a"><rect x="2.6" y="5.9" width="1.8" height="1.6"/><rect x="5.6" y="5.9" width="1.8" height="1.6"/><rect x="8.6" y="5.9" width="1.8" height="1.6"/><rect x="2.6" y="8.7" width="1.8" height="1.6"/><rect x="5.6" y="8.7" width="1.8" height="1.6"/><rect x="8.6" y="8.7" width="1.8" height="1.6"/></g><rect x="2.6" y="0.5" width="2" height="3" rx="0.8" fill="#3a3a3a"/><rect x="8.4" y="0.5" width="2" height="3" rx="0.8" fill="#3a3a3a"/></svg>
<div class="t" style="left:1147.4px;top:772px;font-size:16.67px;line-height:20px;color:#4d4d4d;font-weight:normal;">№:</div>
<div class="r" style="left:1176px;top:767.5px;width:159px;height:28.0px;background:#fff;border:1px solid #a6a6a6;border-radius:3px"></div>
<div class="t" style="left:1180.5px;top:772px;font-size:16.67px;line-height:20px;color:#333;font-weight:normal;">145-В</div>
<div class="t" style="left:710.5px;top:809px;font-size:16.67px;line-height:20px;color:#2a5bb8;font-weight:normal;text-decoration:underline;text-underline-offset:1px;text-decoration-skip-ink:none">Связи: не заданы</div>
<div class="t" style="left:708.7px;top:841px;font-size:16.67px;line-height:20px;color:#4d4d4d;font-weight:normal;">Комментарий:</div>
<div class="t" style="left:1374.7px;top:200px;font-size:16.67px;line-height:20px;color:#a0a0a0;font-weight:normal;">Рег. №:</div>
<div class="r" style="left:1526px;top:195.5px;width:174px;height:28.0px;background:#fff;border:1px solid #d2d2d2;border-radius:3px"></div>
<div class="t" style="left:1374.7px;top:240px;font-size:16.67px;line-height:20px;color:#a0a0a0;font-weight:normal;">от:</div>
<div class="r" style="left:1526px;top:236px;width:174px;height:27.5px;background:#fff;border:1px solid #d2d2d2;border-radius:3px"></div>
<div class="t" style="left:1541px;top:239px;font-size:16.67px;line-height:20px;color:#b0b0b0;font-weight:normal;">.</div>
<div class="t" style="left:1557px;top:239px;font-size:16.67px;line-height:20px;color:#b0b0b0;font-weight:normal;">.</div>
<div class="t" style="left:1596.5px;top:239px;font-size:16.67px;line-height:20px;color:#b0b0b0;font-weight:normal;">:</div>
<div class="t" style="left:1374.7px;top:275px;font-size:16.67px;line-height:20px;color:#00903f;font-weight:bold;">Реквизиты</div>
<div class="t" style="left:1374.7px;top:303px;font-size:16.67px;line-height:20px;color:#4d4d4d;font-weight:normal;">Статус документа:</div>
<div class="r" style="left:1526px;top:299px;width:174px;height:27px;background:#fff;border:1px solid #a6a6a6;border-radius:3px"></div>
<div class="t" style="left:1374.7px;top:343px;font-size:16.67px;line-height:20px;color:#4d4d4d;font-weight:normal;">Срок:</div>
<div class="r" style="left:1526px;top:339px;width:174px;height:28px;background:#fff;border:1px solid #a6a6a6;border-radius:3px"></div>
<div class="t" style="left:1530.6px;top:343px;font-size:16.67px;line-height:20px;color:#333;font-weight:normal;">30.12.2020</div>
<div class="t" style="left:1374.7px;top:383px;font-size:16.67px;line-height:20px;color:#4d4d4d;font-weight:normal;">Гриф:</div>
<div class="r" style="left:1526px;top:379px;width:174px;height:28px;background:#fff;border:1px solid #a6a6a6;border-radius:3px"></div>
<div class="t" style="left:1530.6px;top:383px;font-size:16.67px;line-height:20px;color:#333;font-weight:normal;">Общий</div>
<div class="t" style="left:1374.7px;top:418px;font-size:16.67px;line-height:20px;color:#4d4d4d;font-weight:normal;">Состояние:</div>
<div class="r" style="left:1526px;top:418px;width:174px;height:64px;background:#fff;border:1px solid #a6a6a6;border-radius:3px"></div>
<div class="t" style="left:1530.6px;top:422px;font-size:16.67px;line-height:20px;color:#333;font-weight:normal;">Рассмотрен, На исполнении</div>
<div class="t" style="left:1530.6px;top:442px;font-size:16.67px;line-height:20px;color:#333;font-weight:normal;">Исполнение: Рассмотрен</div>
<div class="t" style="left:1530.6px;top:462px;font-size:16.67px;line-height:20px;color:#333;font-weight:normal;">Ознакомление: Ознакомлен</div>
<div class="t" style="left:1374.7px;top:498px;font-size:16.67px;line-height:20px;color:#4d4d4d;font-weight:normal;">Подразделение:</div>
<div class="r" style="left:1526px;top:494px;width:174px;height:27px;background:#fff;border:1px solid #a6a6a6;border-radius:3px"></div>
<div class="t" style="left:1530.6px;top:498px;font-size:16.67px;line-height:20px;color:#333;font-weight:normal;">ООО &quot;СтройГрупп&quot;</div>
<div class="t" style="left:1374.7px;top:537px;font-size:16.67px;line-height:20px;color:#4d4d4d;font-weight:normal;">Подготовил:</div>
<div class="r" style="left:1526px;top:534px;width:174px;height:27px;background:#fff;border:1px solid #a6a6a6;border-radius:3px"></div>
<div class="t" style="left:1530.6px;top:537px;font-size:16.67px;line-height:20px;color:#333;font-weight:normal;">Фролова Елена Михайловна</div>
<div class="t" style="left:1374.7px;top:577px;font-size:16.67px;line-height:20px;color:#4d4d4d;font-weight:normal;">Ответственный:</div>
<div class="r" style="left:1526px;top:573px;width:174px;height:28px;background:#fff;border:1px solid #a6a6a6;border-radius:3px"></div>
<div class="t" style="left:1374.7px;top:613px;font-size:16.67px;line-height:20px;color:#00903f;font-weight:bold;">Хранение</div>
<div class="t" style="left:1374.7px;top:641px;font-size:16.67px;line-height:20px;color:#4d4d4d;font-weight:normal;">Состав:</div>
<div class="r" style="left:1526px;top:636px;width:174px;height:28px;background:#fff;border:1px solid #a6a6a6;border-radius:3px"></div>
<div class="t" style="left:1530.6px;top:641px;font-size:16.67px;line-height:20px;color:#333;font-weight:normal;">Листов 1, экземпляров 1</div>
<div class="t" style="left:1374.7px;top:681px;font-size:16.67px;line-height:20px;color:#4d4d4d;font-weight:normal;">Форма:</div>
<div class="r" style="left:1526px;top:676px;width:174px;height:28px;background:#fff;border:1px solid #a6a6a6;border-radius:3px"></div>
<div class="t" style="left:1530.6px;top:681px;font-size:16.67px;line-height:20px;color:#333;font-weight:normal;">Бумажная</div>
<div class="t" style="left:1374.7px;top:721px;font-size:16.67px;line-height:20px;color:#4d4d4d;font-weight:normal;">В дело:</div>
<div class="r" style="left:1526px;top:716px;width:174px;height:28px;background:#fff;border:1px solid #a6a6a6;border-radius:3px"></div>
<svg class="s" style="left:690px;top:889px;" width="6" height="6" viewBox="0 0 6 6"><path d="M5.5 0.5 L0.5 3 L5.5 5.5 Z" fill="#bdbdbd"/></svg>
<div class="r" style="left:707px;top:887px;width:928px;height:14px;background:#d6d6d6;border-radius:7px"></div>
<div class="r" style="left:707px;top:887px;width:687px;height:14px;background:#9b9b9b;border-radius:7px"></div>
<svg class="s" style="left:1646px;top:889.5px;" width="7" height="6" viewBox="0 0 7 6"><path d="M0.5 0.5 L6 3 L0.5 5.5 Z" fill="#454545"/></svg>
</div></div>
<div class="r" style="left:873px;top:360px;width:332.5px;height:147px;background:#fff;border:4px solid #e2007a;border-radius:4px;box-shadow:0 0 10px rgba(0,0,0,.18)"></div>
<div class="t" style="left:889.8px;top:375px;font-size:23px;line-height:28px;color:#7a7a7a;font-weight:normal;">Укажите дату</div>
<svg class="s" style="left:1098px;top:381px;" width="6" height="15" viewBox="0 0 6 15"><g fill="#707070"><circle cx="3" cy="2.5" r="1.9"/><circle cx="3" cy="7.5" r="1.9"/><circle cx="3" cy="12.5" r="1.9"/></g></svg>
<div class="r" style="left:1134px;top:383.5px;width:11.5px;height:11.5px;border:1.3px solid #333"></div>
<svg class="s" style="left:1170px;top:381px;" width="14" height="14" viewBox="0 0 14 14"><path d="M1 1 L13 13 M13 1 L1 13" stroke="#333" stroke-width="1.4" fill="none"/></svg>
<div class="t" style="left:890.3px;top:420px;font-size:16.67px;line-height:20px;color:#4d4d4d;font-weight:normal;">от:</div>
<div class="r" style="left:915px;top:413.5px;width:234px;height:34px;border:2px solid #f7c21a;background:#fff"></div>
<div class="r" style="left:922px;top:420.7px;width:149px;height:18.6px;background:#5266c4"></div>
<div class="t" style="left:923px;top:420px;font-size:16.67px;line-height:20px;color:#fff;font-weight:normal;">11.02.2026 11:25:31</div>
<div class="r" style="left:1119px;top:417.5px;width:1px;height:26px;background:#a0a0a0"></div>
<svg class="s" style="left:1125.5px;top:423px;" width="13" height="13" viewBox="0 0 13 13"><rect x="0.5" y="2" width="12" height="10.5" rx="1" fill="#3a3a3a"/><rect x="1.7" y="5" width="9.6" height="6.3" fill="#fff"/><g fill="#3a3a3a"><rect x="2.6" y="5.9" width="1.8" height="1.6"/><rect x="5.6" y="5.9" width="1.8" height="1.6"/><rect x="8.6" y="5.9" width="1.8" height="1.6"/><rect x="2.6" y="8.7" width="1.8" height="1.6"/><rect x="5.6" y="8.7" width="1.8" height="1.6"/><rect x="8.6" y="8.7" width="1.8" height="1.6"/></g><rect x="2.6" y="0.5" width="2" height="3" rx="0.8" fill="#3a3a3a"/><rect x="8.4" y="0.5" width="2" height="3" rx="0.8" fill="#3a3a3a"/></svg>
<div class="r by" style="left:890.3px;top:456px;width:183.7px;height:33px"></div>
<div class="t" style="left:907.5px;top:463px;font-size:16.67px;line-height:20px;color:#333;font-weight:bold;letter-spacing:-0.1px">Зарегистрировать</div>
<div class="r bw" style="left:1085.3px;top:456px;width:91.5px;height:33px"></div>
<div class="t" style="left:1102px;top:463px;font-size:16.67px;line-height:20px;color:#444;font-weight:normal;">Отмена</div>
</body></html>
